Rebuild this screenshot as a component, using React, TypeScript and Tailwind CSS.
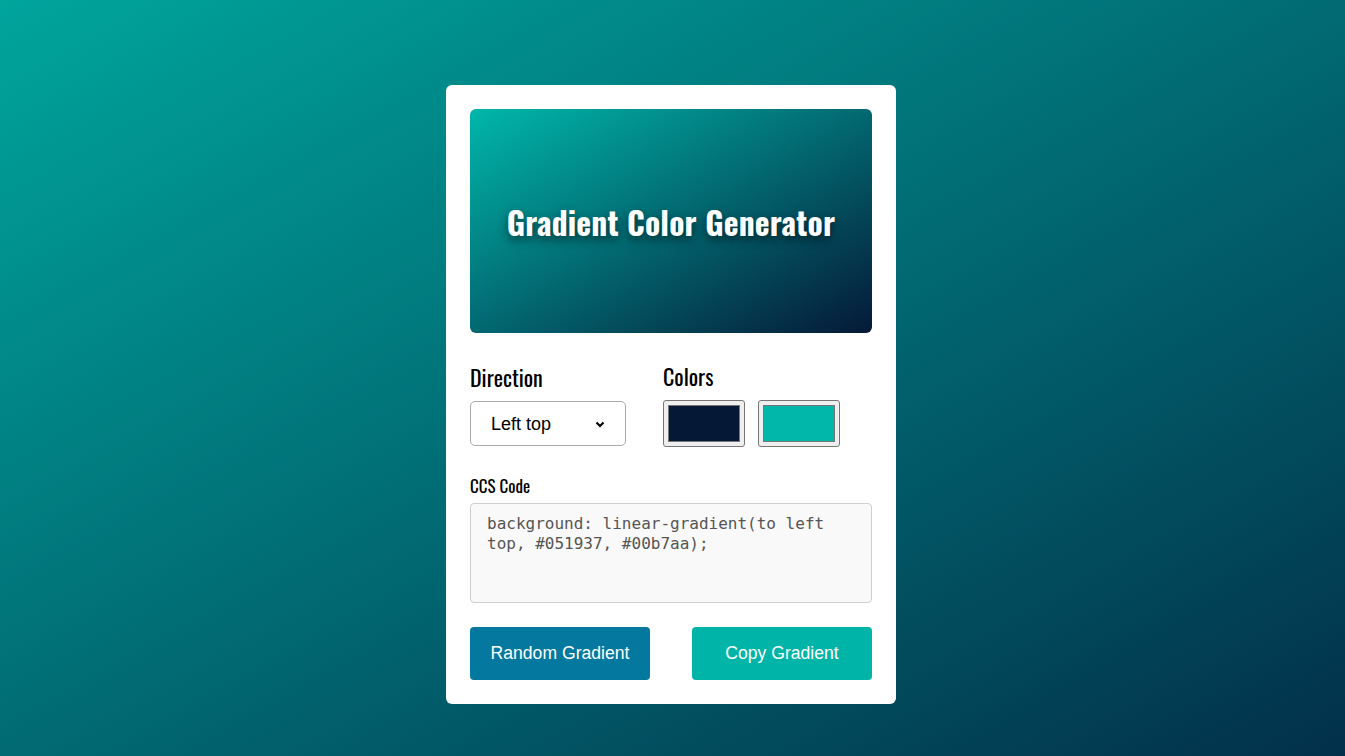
import React from "react";

const head = "font-['Oswald','Liberation_Sans_Narrow','DejaVu_Sans_Condensed','Roboto_Condensed',sans-serif]";

export default function App() {
  return (
    <div className="min-h-screen w-full bg-[linear-gradient(to_left_top,#02304a,#00a59c)] flex justify-center pr-[3px] pt-[85px] font-['Liberation_Sans',Arial,sans-serif]">
      <div className="w-[450px] h-[619px] bg-white rounded-[6px] p-6 flex flex-col">
        <div className="h-[225px] rounded-[6px] bg-[linear-gradient(to_left_top,#051937,#00b7aa)] flex items-center justify-center">
          <h1 className={`${head} text-white text-[31.5px] font-bold tracking-[0.2px] [text-shadow:0_4px_10px_rgba(0,0,0,0.55)]`}>
            Gradient Color Generator
          </h1>
        </div>
        <div className="flex mt-[29px]">
          <div className="w-[193px]">
            <div className={`${head} text-[22px] leading-[30px] text-black`}>Direction</div>
            <div className="mt-[9px] w-[156px] h-[45px] border border-[#a9a9a9] rounded-[5px] flex items-center pl-[20px] pr-[20px] justify-between">
              <span className="text-[18px] text-black mt-[2px]">Left top</span>
              <svg width="10" height="7" viewBox="0 0 10 7" className="mt-[1px]">
                <path d="M1.5 1.5 L5 5 L8.5 1.5" fill="none" stroke="#000" strokeWidth="2" />
              </svg>
            </div>
          </div>
          <div>
            <div className={`${head} text-[22px] leading-[28px] text-black`}>Colors</div>
            <div className="flex gap-[13px] mt-[10px]">
              {["#051937", "#00b7aa"].map((c) => (
                <div key={c} className="w-[82px] h-[47px] bg-[#efefef] border border-[#767676] rounded-[3px] p-[4px]">
                  <div className="w-full h-full border border-[#777]" style={{ background: c }} />
                </div>
              ))}
            </div>
          </div>
        </div>
        <div className={`${head} text-[17px] leading-[24px] text-black mt-[27px]`}>CCS Code</div>
        <div className="mt-[5px] h-[100px] bg-[#f9f9f9] border border-[#cfcfcf] rounded-[4px] px-[16px] pt-[10px] font-['DejaVu_Sans_Mono','Liberation_Mono',monospace] text-[16px] leading-[20px] text-[#555]">
          background: linear-gradient(to left top, #051937, #00b7aa);
        </div>
        <div className="flex justify-between mt-[24px]">
          <button className="w-[180px] h-[53px] rounded-[4px] bg-[#04789e] text-white text-[17.6px]">Random Gradient</button>
          <button className="w-[180px] h-[53px] rounded-[4px] bg-[#00b5a8] text-white text-[17.6px]">Copy Gradient</button>
        </div>
      </div>
    </div>
  );
}
